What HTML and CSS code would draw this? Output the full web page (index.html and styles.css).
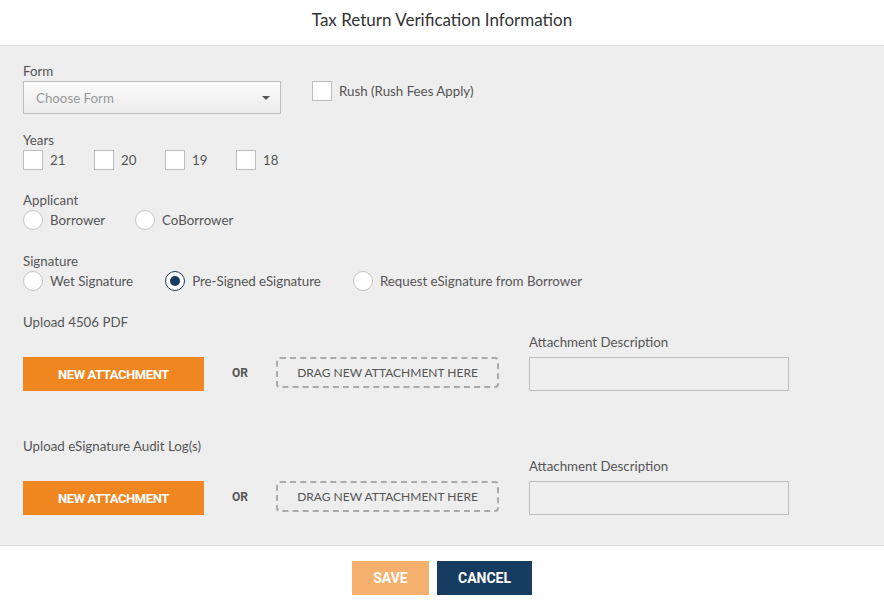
FILE: index.html
```html
<!DOCTYPE html>
<html>
<head>
<meta charset="utf-8">
<link rel="stylesheet" href="styles.css">
</head>
<body>
<div class="modal">
  <div class="modal-header">Tax Return Verification Information</div>
  <div class="modal-body">
    <div class="row-top">
      <div class="field">
        <div class="label">Form</div>
        <div class="select">
          <span class="placeholder">Choose Form</span>
          <span class="caret"></span>
        </div>
      </div>
      <label class="check rush"><span class="box"></span><span>Rush (Rush Fees Apply)</span></label>
    </div>

    <div class="group">
      <div class="label">Years</div>
      <div class="options years">
        <label class="check"><span class="box"></span><span>21</span></label>
        <label class="check"><span class="box"></span><span>20</span></label>
        <label class="check"><span class="box"></span><span>19</span></label>
        <label class="check"><span class="box"></span><span>18</span></label>
      </div>
    </div>

    <div class="group">
      <div class="label">Applicant</div>
      <div class="options applicant">
        <label class="check"><span class="radio"></span><span>Borrower</span></label>
        <label class="check"><span class="radio"></span><span>CoBorrower</span></label>
      </div>
    </div>

    <div class="group sig-group">
      <div class="label">Signature</div>
      <div class="options sig">
        <label class="check"><span class="radio"></span><span>Wet Signature</span></label>
        <label class="check"><span class="radio checked"></span><span>Pre-Signed eSignature</span></label>
        <label class="check"><span class="radio"></span><span>Request eSignature from Borrower</span></label>
      </div>
    </div>

    <div class="group upload first">
      <div class="label">Upload 4506 PDF</div>
      <div class="upload-row">
        <button class="btn-attach">NEW ATTACHMENT</button>
        <span class="or">OR</span>
        <div class="dropzone">DRAG NEW ATTACHMENT HERE</div>
        <div class="desc">
          <div class="label">Attachment Description</div>
          <div class="desc-input"></div>
        </div>
      </div>
    </div>

    <div class="group upload second">
      <div class="label">Upload eSignature Audit Log(s)</div>
      <div class="upload-row">
        <button class="btn-attach">NEW ATTACHMENT</button>
        <span class="or">OR</span>
        <div class="dropzone">DRAG NEW ATTACHMENT HERE</div>
        <div class="desc">
          <div class="label">Attachment Description</div>
          <div class="desc-input"></div>
        </div>
      </div>
    </div>
  </div>
  <div class="modal-footer">
    <button class="btn save">SAVE</button>
    <button class="btn cancel">CANCEL</button>
  </div>
</div>
</body>
</html>
```

FILE: styles.css
```css
* { box-sizing: border-box; }
html, body { margin: 0; padding: 0; background: #fff; }
body {
  font-family: "Lato", "Liberation Sans", sans-serif;
  color: #555;
  font-size: 13.3px;
  width: 884px;
  height: 604px;
  overflow: hidden;
}
.modal-header {
  height: 46px;
  border-bottom: 1px solid #e0e0e0;
  display: flex;
  align-items: center;
  justify-content: center;
  font-size: 17px;
  font-weight: 400;
  color: #333;
  padding-bottom: 7px;
}
.modal-body {
  background: #eeeeee;
  height: 499px;
  padding: 17px 23px 0;
}
.label {
  line-height: 16px;
  color: #555;
}
.row-top { display: flex; align-items: flex-start; }
.select {
  margin-top: 2px;
  width: 258px;
  height: 33px;
  border: 1px solid #bdbdbd;
  background: linear-gradient(#fbfbfb, #ececec);
  display: flex;
  align-items: center;
  justify-content: space-between;
  padding: 0 10px 0 12px;
}
.placeholder { color: #999; }
.caret {
  width: 0; height: 0;
  border-left: 4px solid transparent;
  border-right: 4px solid transparent;
  border-top: 4px solid #555;
}
.check {
  display: flex;
  align-items: center;
  gap: 7px;
  color: #555;
  line-height: 20px;
}
.rush { margin-left: 31px; margin-top: 18px; }
.box {
  width: 20px; height: 20px;
  background: #fff;
  border: 1px solid #bdbdbd;
  flex: none;
}
.radio {
  width: 20px; height: 20px;
  border-radius: 50%;
  background: #fff;
  border: 1px solid #c4c4c4;
  flex: none;
  display: flex;
  align-items: center;
  justify-content: center;
}
.radio.checked { border: 1.5px solid #173c61; }
.radio.checked::after {
  content: "";
  width: 10px; height: 10px;
  border-radius: 50%;
  background: #173c61;
}
.group { margin-top: 18px; }
.group + .group { margin-top: 22px; }
.group.sig-group { margin-top: 23px; }
.group.upload.first { margin-top: 23px; }
.options { display: flex; gap: 29px; margin-top: 2px; }
.options.years { gap: 0; }
.options.years .check { width: 71px; flex: none; }
.options.applicant { gap: 30px; }
.options.sig { gap: 32px; }
.upload-row {
  display: flex;
  align-items: flex-end;
  margin-top: 4px;
}
.btn-attach {
  width: 181px;
  height: 34px;
  background: #f0861f;
  border: none;
  color: #fff;
  font-family: "Roboto", "Liberation Sans", sans-serif;
  font-weight: 700;
  font-size: 13px;
  letter-spacing: -0.4px;
  padding: 0;
}
.or {
  width: 72px;
  height: 34px;
  display: flex;
  align-items: center;
  justify-content: center;
  font-weight: 700;
  font-size: 12px;
  color: #555;
  padding-bottom: 2px;
  font-family: "Roboto", "Liberation Sans", sans-serif;
}
.dropzone {
  width: 223px;
  height: 31px;
  margin-bottom: 3px;
  border: 2px dashed #aaa;
  border-radius: 4px;
  display: flex;
  align-items: center;
  justify-content: center;
  font-size: 12px;
  color: #555;
}
.desc { margin-left: 30px; }
.desc-input {
  margin-top: 7px;
  width: 260px;
  height: 34px;
  border: 1px solid #bdbdbd;
  background: #eeeeee;
}
.group.upload.second { margin-top: 47px; }
.modal-footer {
  border-top: 1px solid #e0e0e0;
  height: 59px;
  display: flex;
  justify-content: center;
  align-items: flex-start;
  padding-top: 15px;
  gap: 8px;
}
.btn {
  height: 34px;
  border: none;
  color: #fff;
  font-family: "Roboto", "Liberation Sans", sans-serif;
  font-weight: 700;
  font-size: 14px;
  padding: 0;
}
.save { width: 77px; background: #f5b06e; }
.cancel { width: 95px; background: #173c61; }
```
